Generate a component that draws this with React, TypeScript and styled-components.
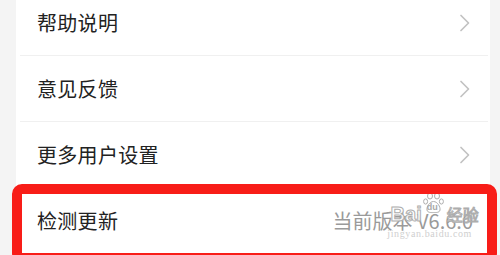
import styled, { createGlobalStyle } from "styled-components";

const GlobalStyle = createGlobalStyle`
  html, body {
    margin: 0;
    padding: 0;
    background: #f4f4f4;
    overflow: hidden;
  }
  body {
    font-family: "Noto Sans CJK SC", "Noto Sans", sans-serif;
  }
`;

const Page = styled.div`
  width: 500px;
  height: 255px;
  background: #f4f4f4;
  overflow: hidden;
`;

const Panel = styled.div`
  margin: -10px 10px 0 16px;
  background: #fff;
`;

const Row = styled.div<{ $last?: boolean }>`
  position: relative;
  display: flex;
  align-items: center;
  justify-content: space-between;
  height: 65px;
  padding: 0 19px 0 21px;
  &::after {
    content: "";
    display: ${(p) => (p.$last ? "none" : "block")};
    position: absolute;
    left: 4px;
    right: 2px;
    bottom: -1px;
    height: 1px;
    background: #f0f0f0;
  }
  & + & {
    margin-top: 1px;
  }
`;

const Label = styled.span`
  font-size: 20px;
  color: #222;
  letter-spacing: 0.3px;
`;

const Version = styled.span`
  position: relative;
  font-size: 20px;
  color: #9a9a9a;
  margin-right: -2px;
  white-space: nowrap;
`;

const Highlight = styled.div`
  position: absolute;
  top: -4px;
  left: -4px;
  right: -7px;
  bottom: -10px;
  border: 10px solid #f81d18;
  border-radius: 10px;
  pointer-events: none;
`;

const Watermark = styled.div`
  position: absolute;
  left: 58px;
  top: -14px;
  display: flex;
  flex-direction: column;
  align-items: center;
  white-space: nowrap;
  font-family: "Liberation Sans", sans-serif;
`;

const MarkTop = styled.div`
  display: flex;
  align-items: flex-end;
  height: 34px;
`;

const MarkWord = styled.span<{ $size: number }>`
  font-size: ${(p) => p.$size}px;
  font-weight: bold;
  line-height: 24px;
  color: rgba(255, 255, 255, 0.93);
  -webkit-text-stroke: 1px #adadad;
`;

const MarkCn = styled(MarkWord)`
  font-family: "Noto Sans CJK SC", sans-serif;
  font-weight: normal;
  margin-left: 2px;
`;

const PawBox = styled.span`
  position: relative;
  align-self: flex-start;
  width: 21px;
  height: 22px;
  margin: 0 1px;
`;

const PawText = styled.span`
  position: absolute;
  left: 4px;
  top: 11px;
  font-size: 9px;
  font-weight: bold;
  line-height: 9px;
  color: #a8a8a8;
`;

const MarkUrl = styled.div`
  font-family: "Liberation Serif", serif;
  font-size: 10px;
  color: #cfcfcf;
  line-height: 10px;
  margin-top: 3px;
  margin-left: -10px;
  letter-spacing: 0.6px;
`;

const Chevron = () => (
  <svg width="12" height="18" viewBox="0 0 12 18">
    <path
      d="M2 1.5 L9.5 9 L2 16.5"
      fill="none"
      stroke="#c2c2c2"
      strokeWidth="1.7"
      strokeLinecap="round"
      strokeLinejoin="round"
    />
  </svg>
);

const Paw = () => (
  <svg width="21" height="22" viewBox="0 0 21 22">
    <g fill="rgba(255,255,255,0.95)" stroke="#adadad" strokeWidth="1">
      <ellipse cx="7" cy="4" rx="2.5" ry="3" />
      <ellipse cx="14" cy="4" rx="2.5" ry="3" />
      <ellipse cx="2.6" cy="9.5" rx="2" ry="2.6" />
      <ellipse cx="18.4" cy="9.5" rx="2" ry="2.6" />
      <path d="M10.5 9.5 C6.5 9.5 3.5 15 4 18 C4.5 21 8.5 20.5 10.5 20.5 C12.5 20.5 16.5 21 17 18 C17.5 15 14.5 9.5 10.5 9.5 Z" />
    </g>
  </svg>
);

const items = ["帮助说明", "意见反馈", "更多用户设置"];

export default function App() {
  return (
    <Page>
      <GlobalStyle />
      <Panel>
        {items.map((label) => (
          <Row key={label}>
            <Label>{label}</Label>
            <Chevron />
          </Row>
        ))}
        <Row $last>
          <Label>检测更新</Label>
          <Version>
            当前版本 V6.6.0
            <Watermark>
              <MarkTop>
                <MarkWord $size={20}>Bai</MarkWord>
                <PawBox>
                  <Paw />
                  <PawText>du</PawText>
                </PawBox>
                <MarkCn $size={16}>经验</MarkCn>
              </MarkTop>
              <MarkUrl>jingyan.baidu.com</MarkUrl>
            </Watermark>
          </Version>
          <Highlight />
        </Row>
      </Panel>
    </Page>
  );
}
